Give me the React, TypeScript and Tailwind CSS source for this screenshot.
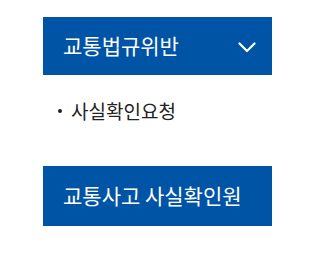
export default function App() {
  return (
    <div className="min-h-[258px] bg-white pt-[17px] pl-[43px] font-['Noto_Sans_CJK_KR',sans-serif]">
      <div className="w-[229px]">
        <button className="flex h-[58px] w-full items-center justify-between bg-[#0054a6] pl-5 pr-[16px] text-[21px] font-normal text-white">
          <span>교통법규위반</span>
          <svg width="18" height="11" viewBox="0 0 18 11" fill="none" className="mt-[2px]">
            <polyline points="1.5,1.5 9,9 16.5,1.5" stroke="white" strokeWidth="2.2" strokeLinecap="round" strokeLinejoin="round" />
          </svg>
        </button>
        <ul className="h-[91px] pt-[22px] pl-[15px] text-[19px] leading-[28px] text-[#222]">
          <li className="flex items-center gap-[9px]">
            <span className="h-[4px] w-[4px] rounded-full bg-[#222]" />
            <span>사실확인요청</span>
          </li>
        </ul>
        <div className="flex h-[60px] items-center bg-[#0054a6] pl-5 text-[21px] font-normal text-white">
          교통사고 사실확인원
        </div>
      </div>
    </div>
  )
}
